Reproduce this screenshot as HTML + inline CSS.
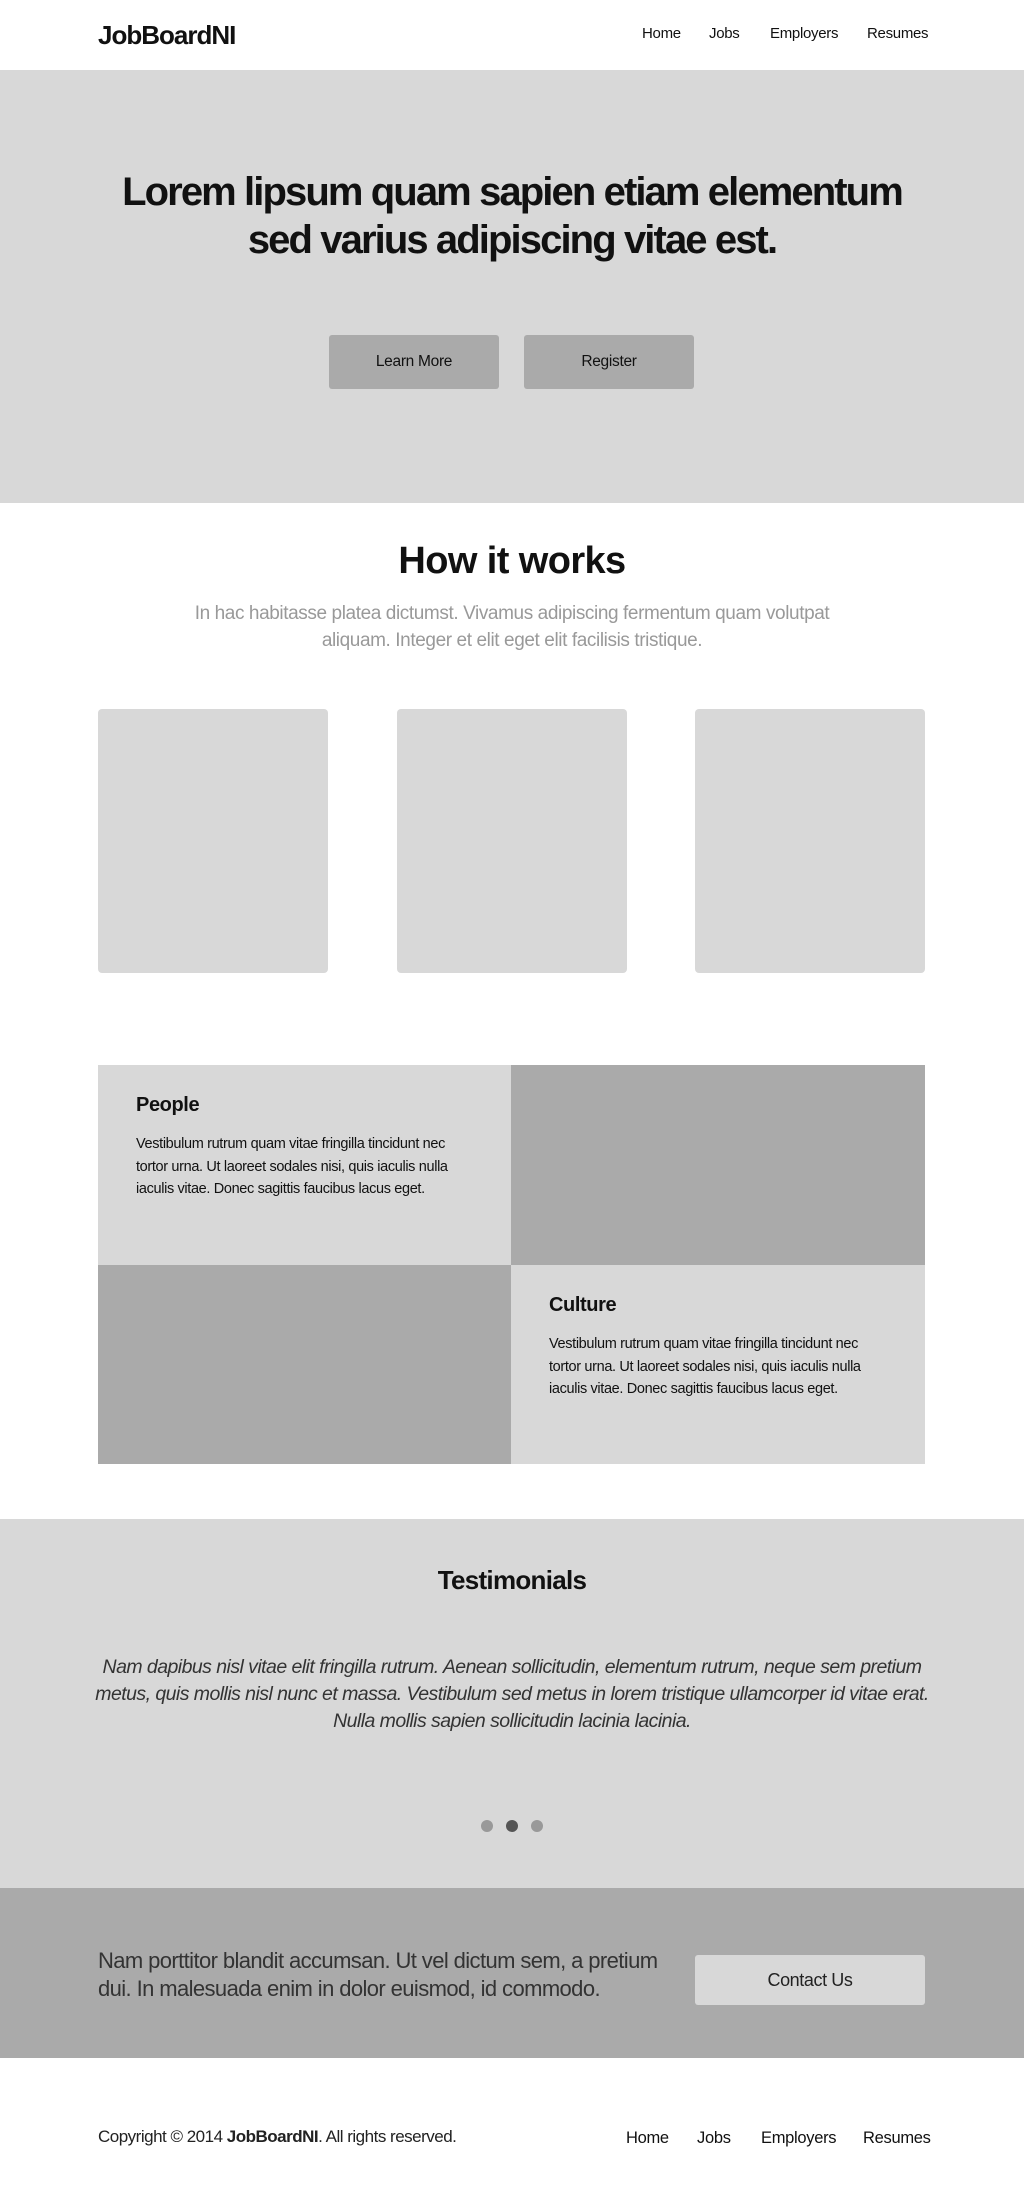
<!DOCTYPE html>
<html><head><meta charset="utf-8"><style>
*{margin:0;padding:0;box-sizing:border-box}
body{width:1024px;height:2200px;background:#fff;font-family:"Liberation Sans",Arial,sans-serif;color:#111;position:relative;overflow:hidden}
.a{position:absolute}
.nav span{position:absolute;font-size:15px;letter-spacing:-0.3px;white-space:nowrap}
</style></head><body>
<div class="a" style="left:98px;top:20px;font-size:26px;font-weight:bold;letter-spacing:-1px">JobBoardNI</div>
<div class="nav a" style="top:25px;left:0;width:1024px;height:20px">
<span style="left:642px">Home</span><span style="left:709px">Jobs</span><span style="left:770px">Employers</span><span style="left:867px">Resumes</span></div>

<div class="a" style="left:0;top:70px;width:1024px;height:433px;background:#d8d8d8"></div>
<div class="a" style="left:0;top:168px;width:1024px;text-align:center;font-size:40px;font-weight:bold;line-height:48px;letter-spacing:-1.9px;white-space:nowrap">Lorem lipsum quam sapien etiam elementum<br>sed varius adipiscing vitae est.</div>
<div class="a" style="left:329px;top:335px;width:170px;height:54px;background:#aaa;border-radius:3px;text-align:center;line-height:54px;font-size:15.5px;letter-spacing:-0.3px">Learn More</div>
<div class="a" style="left:524px;top:335px;width:170px;height:54px;background:#aaa;border-radius:3px;text-align:center;line-height:54px;font-size:15.5px;letter-spacing:-0.3px">Register</div>

<div class="a" style="left:0;top:540px;width:1024px;text-align:center;font-size:38px;font-weight:bold;letter-spacing:-0.6px">How it works</div>
<div class="a" style="left:0;top:600px;width:1024px;text-align:center;font-size:19px;line-height:27px;color:#999;letter-spacing:-0.4px;white-space:nowrap">In hac habitasse platea dictumst. Vivamus adipiscing fermentum quam volutpat<br>aliquam. Integer et elit eget elit facilisis tristique.</div>
<div class="a" style="left:98px;top:709px;width:230px;height:264px;background:#d8d8d8;border-radius:4px"></div>
<div class="a" style="left:397px;top:709px;width:230px;height:264px;background:#d8d8d8;border-radius:4px"></div>
<div class="a" style="left:695px;top:709px;width:230px;height:264px;background:#d8d8d8;border-radius:4px"></div>

<div class="a" style="left:98px;top:1065px;width:413px;height:200px;background:#d8d8d8"></div>
<div class="a" style="left:511px;top:1065px;width:414px;height:200px;background:#aaa"></div>
<div class="a" style="left:98px;top:1265px;width:413px;height:199px;background:#aaa"></div>
<div class="a" style="left:511px;top:1265px;width:414px;height:199px;background:#d8d8d8"></div>
<div class="a" style="left:136px;top:1094px;font-size:20px;font-weight:bold;letter-spacing:-0.4px">People</div>
<div class="a" style="left:136px;top:1133px;font-size:14.5px;line-height:22.5px;letter-spacing:-0.35px;white-space:nowrap">Vestibulum rutrum quam vitae fringilla tincidunt nec<br>tortor urna. Ut laoreet sodales nisi, quis iaculis nulla<br>iaculis vitae. Donec sagittis faucibus lacus eget.</div>
<div class="a" style="left:549px;top:1294px;font-size:20px;font-weight:bold;letter-spacing:-0.4px">Culture</div>
<div class="a" style="left:549px;top:1333px;font-size:14.5px;line-height:22.5px;letter-spacing:-0.35px;white-space:nowrap">Vestibulum rutrum quam vitae fringilla tincidunt nec<br>tortor urna. Ut laoreet sodales nisi, quis iaculis nulla<br>iaculis vitae. Donec sagittis faucibus lacus eget.</div>

<div class="a" style="left:0;top:1519px;width:1024px;height:369px;background:#d8d8d8"></div>
<div class="a" style="left:0;top:1565px;width:1024px;text-align:center;font-size:26px;font-weight:bold;letter-spacing:-0.7px">Testimonials</div>
<div class="a" style="left:0;top:1654px;width:1024px;text-align:center;font-size:19.5px;line-height:27px;font-style:italic;color:#333;letter-spacing:-0.55px;white-space:nowrap">Nam dapibus nisl vitae elit fringilla rutrum. Aenean sollicitudin, elementum rutrum, neque sem pretium<br>metus, quis mollis nisl nunc et massa. Vestibulum sed metus in lorem tristique ullamcorper id vitae erat.<br>Nulla mollis sapien sollicitudin lacinia lacinia.</div>
<div class="a" style="left:481px;top:1820px;width:12px;height:12px;border-radius:50%;background:#999"></div>
<div class="a" style="left:506px;top:1820px;width:12px;height:12px;border-radius:50%;background:#555"></div>
<div class="a" style="left:531px;top:1820px;width:12px;height:12px;border-radius:50%;background:#999"></div>

<div class="a" style="left:0;top:1888px;width:1024px;height:170px;background:#aaa"></div>
<div class="a" style="left:98px;top:1947px;font-size:22px;line-height:28px;color:#333;letter-spacing:-0.6px;white-space:nowrap">Nam porttitor blandit accumsan. Ut vel dictum sem, a pretium<br>dui. In malesuada enim in dolor euismod, id commodo.</div>
<div class="a" style="left:695px;top:1955px;width:230px;height:50px;background:#d8d8d8;border-radius:3px;text-align:center;line-height:50px;font-size:18px;color:#222;letter-spacing:-0.4px">Contact Us</div>

<div class="a" style="left:98px;top:2127px;font-size:17px;color:#222;letter-spacing:-0.5px">Copyright © 2014 <b>JobBoardNI</b>. All rights reserved.</div>
<div class="nav a" style="top:2129px;left:0;width:1024px;height:20px">
<span style="left:626px;font-size:16.5px">Home</span><span style="left:697px;font-size:16.5px">Jobs</span><span style="left:761px;font-size:16.5px">Employers</span><span style="left:863px;font-size:16.5px">Resumes</span></div>
</body></html>
